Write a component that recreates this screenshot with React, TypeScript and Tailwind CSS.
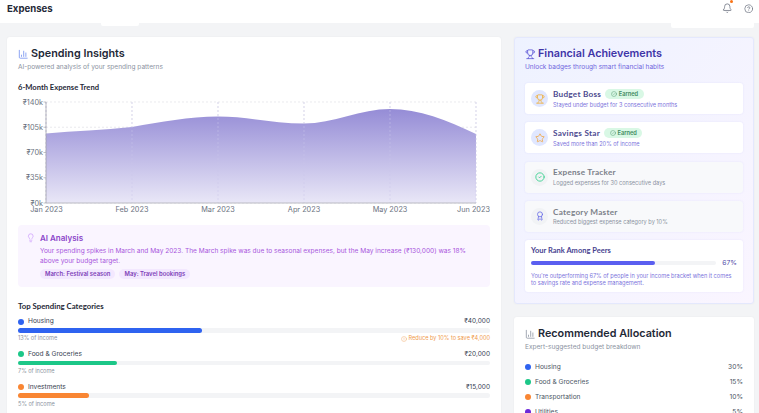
import { Award, Bell, ChartColumn, CircleAlert, CircleCheck, CircleHelp, Lightbulb, Star, Trophy } from 'lucide-react'
import type { ReactNode } from 'react'

const heading = "font-['Inter',sans-serif]"
const subheading = "font-['Lato',sans-serif]"

const ticksY = [
  { y: 8, label: '₹140k' },
  { y: 33.25, label: '₹105k' },
  { y: 58.5, label: '₹70k' },
  { y: 83.75, label: '₹35k' },
  { y: 109, label: '₹0k' },
]
const ticksX = [
  { x: 28, label: 'Jan 2023' },
  { x: 114, label: 'Feb 2023' },
  { x: 200, label: 'Mar 2023' },
  { x: 286, label: 'Apr 2023' },
  { x: 372, label: 'May 2023' },
  { x: 458, label: 'Jun 2023' },
]

const curve =
  'M28 39.5 C57 37 85 36 114 33 C143 28 171 22.5 200 22.5 C229 22.5 257 29.5 286 29.5 C315 29.5 343 15 372 15 C401 15 429 26 458 40'

function TrendChart() {
  return (
    <svg width="472" height="122" viewBox="0 0 472 122" className="block">
      <defs>
        <linearGradient id="trend" x1="0" y1="0" x2="0" y2="1">
          <stop offset="0%" stopColor="#958cd6" />
          <stop offset="100%" stopColor="#e9e7f7" />
        </linearGradient>
      </defs>
      {ticksY.map((t) => (
        <line key={t.y} x1="28" x2="458" y1={t.y} y2={t.y} stroke="#dcdce2" strokeWidth="0.6" strokeDasharray="2 2" />
      ))}
      {ticksX.map((t) => (
        <line key={t.x} x1={t.x} x2={t.x} y1="8" y2="109" stroke="#dcdce2" strokeWidth="0.6" strokeDasharray="2 2" />
      ))}
      <path d={`${curve} L458 109 L28 109 Z`} fill="url(#trend)" />
      {ticksX.map((t) => (
        <line key={t.x} x1={t.x} x2={t.x} y1="8" y2="109" stroke="#c9c5ea" strokeWidth="0.5" strokeDasharray="2 2" />
      ))}
      <line x1="28" x2="28" y1="8" y2="109" stroke="#9a9aa2" strokeWidth="0.7" />
      <line x1="28" x2="458" y1="109" y2="109" stroke="#b4b4bc" strokeWidth="0.9" />
      {ticksY.map((t) => (
        <g key={t.y}>
          <line x1="25.5" x2="28" y1={t.y} y2={t.y} stroke="#9a9aa2" strokeWidth="0.6" />
          <text x="25" y={t.y + 2.7} textAnchor="end" fontSize="7.3" fill="#6b7280" fontFamily="Inter, sans-serif">
            {t.label}
          </text>
        </g>
      ))}
      {ticksX.map((t) => (
        <text
          key={t.x}
          x={t.x === 458 ? 455.5 : t.x === 28 ? 28.5 : t.x}
          y="117.8"
          textAnchor="middle"
          fontSize="7.3"
          fill="#6b7280"
          fontFamily="Inter, sans-serif"
        >
          {t.label}
        </text>
      ))}
    </svg>
  )
}

function CategoryRow({ name, amount, color, width, note, tip }: { name: string; amount: string; color: string; width: string; note: string; tip?: boolean }) {
  return (
    <div className="h-[32.7px]">
      <div className="flex h-[12px] items-center justify-between text-[6.6px] leading-none text-[#374151]">
        <div className="flex items-center gap-[4px]">
          <span className={`size-[6px] rounded-full ${color}`} />
          <span>{name}</span>
        </div>
        <span className="text-[6.5px]">{amount}</span>
      </div>
      <div className="mt-[0.6px] h-[4.6px] rounded-full bg-[#f3f4f6]">
        <div className={`h-full rounded-full ${color} ${width}`} />
      </div>
      <div className="mt-[2.6px] flex items-center justify-between text-[5.6px] leading-[7px] text-[#8b93a1]">
        <span>{note}</span>
        {tip && (
          <span className="flex items-center gap-[1.5px] text-[#f09a4a]">
            <CircleAlert size={6} strokeWidth={1.5} />
            Reduce by 10% to save ₹4,000
          </span>
        )}
      </div>
    </div>
  )
}

function Badge({ icon, title, text, earned, ring }: { icon: ReactNode; title: string; text: string; earned?: boolean; ring: string }) {
  return (
    <div className={`flex h-[31px] items-center gap-[5px] rounded-[3px] px-[6px] shadow-[0_0_2px_rgba(99,102,241,0.12)] ${earned ? 'bg-white' : 'bg-[#f8f9fb]'}`}>
      <div className={`flex size-[17px] shrink-0 items-center justify-center rounded-full ${ring}`}>{icon}</div>
      <div className="min-w-0">
        <div className="flex h-[11px] items-center gap-[4px]">
          <span className={`${subheading} text-[8.2px] font-bold tracking-[0.25px] ${earned ? 'text-[#4d4a8f]' : 'text-[#7b8089]'}`}>{title}</span>
          {earned && (
            <span className="flex h-[10px] items-center gap-[2px] rounded-full bg-[#d9f8e5] px-[5.5px] text-[5.7px] font-semibold text-[#3f8a5f]">
              <CircleCheck size={6} strokeWidth={1.6} />
              Earned
            </span>
          )}
        </div>
        <p className={`mt-[2px] text-[5.6px] leading-[7px] ${earned ? 'text-[#7c74dc]' : 'text-[#8b93a1]'}`}>{text}</p>
      </div>
    </div>
  )
}

function AllocationRow({ name, value, color }: { name: string; value: string; color: string }) {
  return (
    <div className="flex h-[15px] items-center justify-between text-[6.6px] text-[#4b5563]">
      <div className="flex items-center gap-[4px]">
        <span className={`size-[6px] rounded-full ${color}`} />
        <span>{name}</span>
      </div>
      <span className="text-[6.7px]">{value}</span>
    </div>
  )
}

export default function App() {
  return (
    <div className="h-[413px] w-[759px] overflow-hidden bg-[#f3f4f6] font-['Inter',sans-serif]">
      <header className="relative flex h-[23px] items-start justify-between bg-white pl-[7px] pr-[6px] pt-[2.5px]">
        <h1 className={`${heading} text-[9.6px] font-bold leading-[12px] text-[#1f2937]`}>Expenses</h1>
        <div className="flex items-center gap-[11.5px] pt-[0.5px] text-[#6b7280]">
          <div className="relative">
            <Bell size={10.5} strokeWidth={1.8} />
            <span className="absolute -top-[3.5px] right-[-1px] size-[3.5px] rounded-full bg-[#f97316]" />
          </div>
          <CircleHelp size={9.5} strokeWidth={1.8} />
        </div>
      </header>

      <div className="flex h-[3px] bg-[#f3f4f6] pl-[101px] pr-[5px]">
        <div className="h-[3px] w-[38px] rounded-b-[2px] bg-white" />
        <div className="ml-auto h-[4.5px] w-[83px] rounded-b-[2px] bg-white" />
      </div>

      <div className="flex gap-[13px] pl-[7px] pr-[5px] pt-[11px]">
        <main className="h-[400px] w-[494px] shrink-0 rounded-[3px] bg-white px-[11px] pt-[11px] shadow-[0_0_2px_rgba(0,0,0,0.05)]">
          <div className="flex h-[13px] items-center gap-[2.5px]">
            <ChartColumn size={10.5} strokeWidth={1.8} className="text-[#6f8df0]" />
            <h2 className="text-[10.8px] font-semibold text-[#1f2937]">Spending Insights</h2>
          </div>
          <p className="mt-[0.5px] text-[6.55px] leading-[11px] text-[#8b93a1]">AI-powered analysis of your spending patterns</p>

          <h3 className={`${subheading} mt-[9px] text-[7.6px] font-bold leading-[10px] text-[#1f2937]`}>6-Month Expense Trend</h3>
          <div className="mt-[2px]">
            <TrendChart />
          </div>

          <section className="mt-[9px] flex h-[62px] gap-[4px] rounded-[4px] bg-[#faf5ff] pl-[7.5px] pr-[9px] pt-[8px]">
            <Lightbulb size={9.5} strokeWidth={1.4} className="mt-[0.5px] shrink-0 text-[#c084fc]" />
            <div className="ml-[1px] min-w-0">
              <h4 className="text-[8px] font-semibold leading-[10px] text-[#8b45c9]">AI Analysis</h4>
              <p className="mt-[4.5px] text-[6.55px] leading-[9.6px] text-[#a855dd]">
                Your spending spikes in March and May 2023. The March spike was due to seasonal expenses, but the May increase (₹130,000) was 18% above your budget target.
              </p>
              <div className="mt-[3px] flex gap-[4px]">
                <span className="rounded-full bg-[#f3e8ff] px-[5px] text-[5.9px] font-semibold leading-[10px] text-[#7e3fb8]">March: Festival season</span>
                <span className="rounded-full bg-[#f3e8ff] px-[5px] text-[5.9px] font-semibold leading-[10px] text-[#7e3fb8]">May: Travel bookings</span>
              </div>
            </div>
          </section>

          <h3 className={`${subheading} mt-[14px] text-[7.8px] font-bold leading-[10px] text-[#1f2937]`}>Top Spending Categories</h3>
          <div className="mt-[5px]">
            <CategoryRow name="Housing" amount="₹40,000" color="bg-[#2f63f0]" width="w-[184px]" note="13% of income" tip />
            <CategoryRow name="Food & Groceries" amount="₹20,000" color="bg-[#1cc788]" width="w-[99px]" note="7% of income" />
            <CategoryRow name="Investments" amount="₹15,000" color="bg-[#f98633]" width="w-[71px]" note="5% of income" />
          </div>
        </main>

        <aside className="w-[240px] shrink-0">
          <section className="h-[267px] rounded-[3px] border border-[#e4e8fd] bg-gradient-to-br from-[#eef2ff] to-[#faf5ff] px-[10px] pt-[10px] shadow-[0_0_2px_rgba(0,0,0,0.05)]">
            <div className="flex h-[13px] items-center gap-[2.5px]">
              <Trophy size={10.5} strokeWidth={1.8} className="text-[#5a56d6]" />
              <h2 className="text-[10.8px] font-semibold text-[#3f35a8]">Financial Achievements</h2>
            </div>
            <p className="mt-[0.5px] text-[6.5px] leading-[11px] text-[#6f66dd]">Unlock badges through smart financial habits</p>
            <div className="mt-[10.5px] flex flex-col gap-[8.3px]">
              <Badge earned title="Budget Boss" text="Stayed under budget for 3 consecutive months" ring="bg-[#e0e7ff]" icon={<Trophy size={10} strokeWidth={2} className="text-[#eeb244]" />} />
              <Badge earned title="Savings Star" text="Saved more than 20% of income" ring="bg-[#e0e7ff]" icon={<Star size={10} strokeWidth={2} className="text-[#f0a94a]" />} />
              <Badge title="Expense Tracker" text="Logged expenses for 30 consecutive days" ring="bg-[#f1f3f5]" icon={<CircleCheck size={10} strokeWidth={2} className="text-[#2fcf8a]" />} />
              <Badge title="Category Master" text="Reduced biggest expense category by 10%" ring="bg-[#f1f3f5]" icon={<Award size={10} strokeWidth={2} className="text-[#6d71e8]" />} />
            </div>
            <div className="mt-[8px] h-[52px] rounded-[3px] bg-white px-[6px] pt-[6px] shadow-[0_0_2px_rgba(99,102,241,0.12)]">
              <h3 className={`${subheading} text-[7.5px] font-bold leading-[9px] text-[#47428f]`}>Your Rank Among Peers</h3>
              <div className="mt-[4.5px] flex h-[7px] items-center gap-[6px]">
                <div className="h-[3.4px] flex-1 rounded-full bg-[#f3f4f6]">
                  <div className="h-full w-[67%] rounded-full bg-[#5b5ff0]" />
                </div>
                <span className="text-[6.8px] text-[#4f4aa8]">67%</span>
              </div>
              <p className="mt-[6.5px] text-[5.65px] leading-[7.6px] text-[#7c74dc]">
                You're outperforming 67% of people in your income bracket when it comes to savings rate and expense management.
              </p>
            </div>
          </section>

          <section className="mt-[13px] h-[110px] rounded-[3px] bg-white px-[11px] pt-[11px] shadow-[0_0_2px_rgba(0,0,0,0.05)]">
            <div className="flex h-[13px] items-center gap-[2.5px]">
              <ChartColumn size={10.5} strokeWidth={1.8} className="text-[#8b93a1]" />
              <h2 className="text-[10.8px] font-semibold text-[#1f2937]">Recommended Allocation</h2>
            </div>
            <p className="mt-[0.5px] text-[6.55px] leading-[11px] text-[#8b93a1]">Expert-suggested budget breakdown</p>
            <div className="mt-[7.5px]">
              <AllocationRow name="Housing" value="30%" color="bg-[#2f63f0]" />
              <AllocationRow name="Food & Groceries" value="15%" color="bg-[#1cc788]" />
              <AllocationRow name="Transportation" value="10%" color="bg-[#f98633]" />
              <AllocationRow name="Utilities" value="5%" color="bg-[#6d28d9]" />
            </div>
          </section>
        </aside>
      </div>
    </div>
  )
}
